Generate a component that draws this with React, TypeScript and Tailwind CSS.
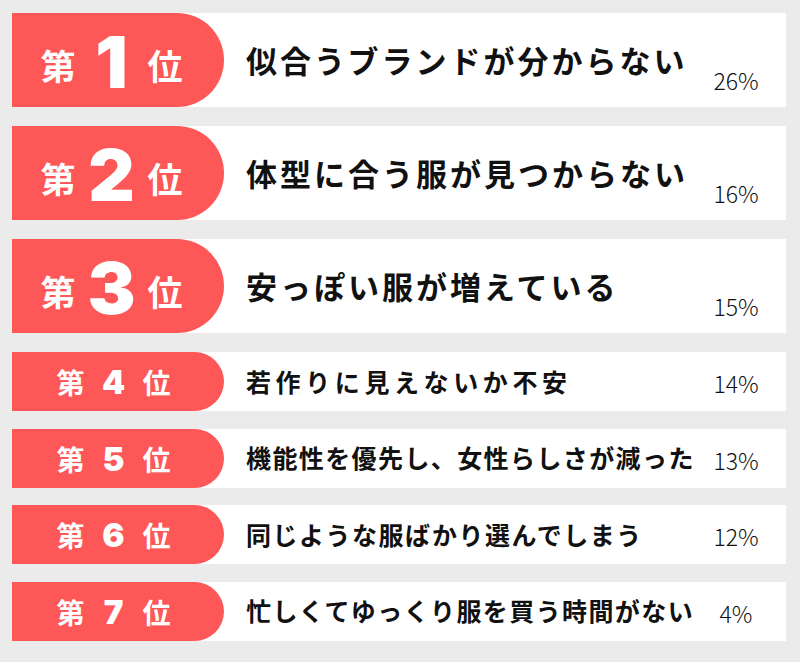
import React from 'react';

type Rank = {
  rank: number;
  title: string;
  percent: string;
  tracking: string;
};

const topRanks: Rank[] = [
  { rank: 1, title: '似合うブランドが分からない', percent: '26%', tracking: 'tracking-[3px]' },
  { rank: 2, title: '体型に合う服が見つからない', percent: '16%', tracking: 'tracking-[3px]' },
  { rank: 3, title: '安っぽい服が増えている', percent: '15%', tracking: 'tracking-[3px]' },
];

const otherRanks: Rank[] = [
  { rank: 4, title: '若作りに見えないか不安', percent: '14%', tracking: 'tracking-[4.6px]' },
  { rank: 5, title: '機能性を優先し、女性らしさが減った', percent: '13%', tracking: 'tracking-[1.4px]' },
  { rank: 6, title: '同じような服ばかり選んでしまう', percent: '12%', tracking: 'tracking-[1.5px]' },
  { rank: 7, title: '忙しくてゆっくり服を買う時間がない', percent: '4%', tracking: 'tracking-[1.4px]' },
];

const jp = { fontFamily: '"Noto Sans CJK JP", "Noto Sans", sans-serif' };
const num = { fontFamily: 'Inter, "Liberation Sans", sans-serif' };

function BigRow({ item }: { item: Rank }) {
  return (
    <div className="flex h-[94px] bg-white">
      {/* Rank badge */}
      <div className="flex w-[212px] shrink-0 items-center justify-center gap-[12px] rounded-r-full bg-[#fe5757] pr-[13px] text-white">
        <span className="pt-[8px] text-[35px] font-bold leading-none">第</span>
        <span className="w-[48px] pt-[3px] text-center text-[72px] font-black leading-none" style={num}>
          {item.rank}
        </span>
        <span className="pt-[8px] text-[35px] font-bold leading-none">位</span>
      </div>

      <div className={`flex flex-1 items-center pl-[22px] text-[31px] font-bold text-[#111] ${item.tracking}`}>
        {item.title}
      </div>

      <div className="flex w-[72px] shrink-0 items-end justify-center pb-[15px] text-[23px] font-light leading-none text-[#111]">
        {item.percent}
      </div>
      <div className="w-[14px] shrink-0" />
    </div>
  );
}

function SmallRow({ item }: { item: Rank }) {
  return (
    <div className="flex h-[59px] bg-white">
      <div className="flex w-[212px] shrink-0 items-baseline justify-center gap-[11px] rounded-r-full bg-[#fe5757] pr-[9px] text-white">
        <span className="text-[28px] font-bold leading-[60px]">第</span>
        <span className="w-[36px] text-center text-[33px] font-black leading-[60px]" style={num}>
          {item.rank}
        </span>
        <span className="text-[28px] font-bold leading-[60px]">位</span>
      </div>

      <div className={`flex flex-1 items-center pl-[22px] text-[25px] font-bold text-[#111] ${item.tracking}`}>
        {item.title}
      </div>

      <div className="flex w-[72px] shrink-0 items-center justify-center pt-[4px] text-[23px] font-light leading-none text-[#111]">
        {item.percent}
      </div>
      <div className="w-[14px] shrink-0" />
    </div>
  );
}

export default function App() {
  return (
    <div className="min-h-[662px] w-[800px] bg-[#ebebeb] pl-[12px] pr-[14px] pt-[13px]" style={jp}>
      {/* Top 3 */}
      <div className="flex flex-col gap-[19px]">
        {topRanks.map((item) => (
          <BigRow key={item.rank} item={item} />
        ))}
      </div>

      {/* Rank 4-7 */}
      <div className="mt-[19px] flex flex-col gap-[17.5px]">
        {otherRanks.map((item) => (
          <SmallRow key={item.rank} item={item} />
        ))}
      </div>
    </div>
  );
}
